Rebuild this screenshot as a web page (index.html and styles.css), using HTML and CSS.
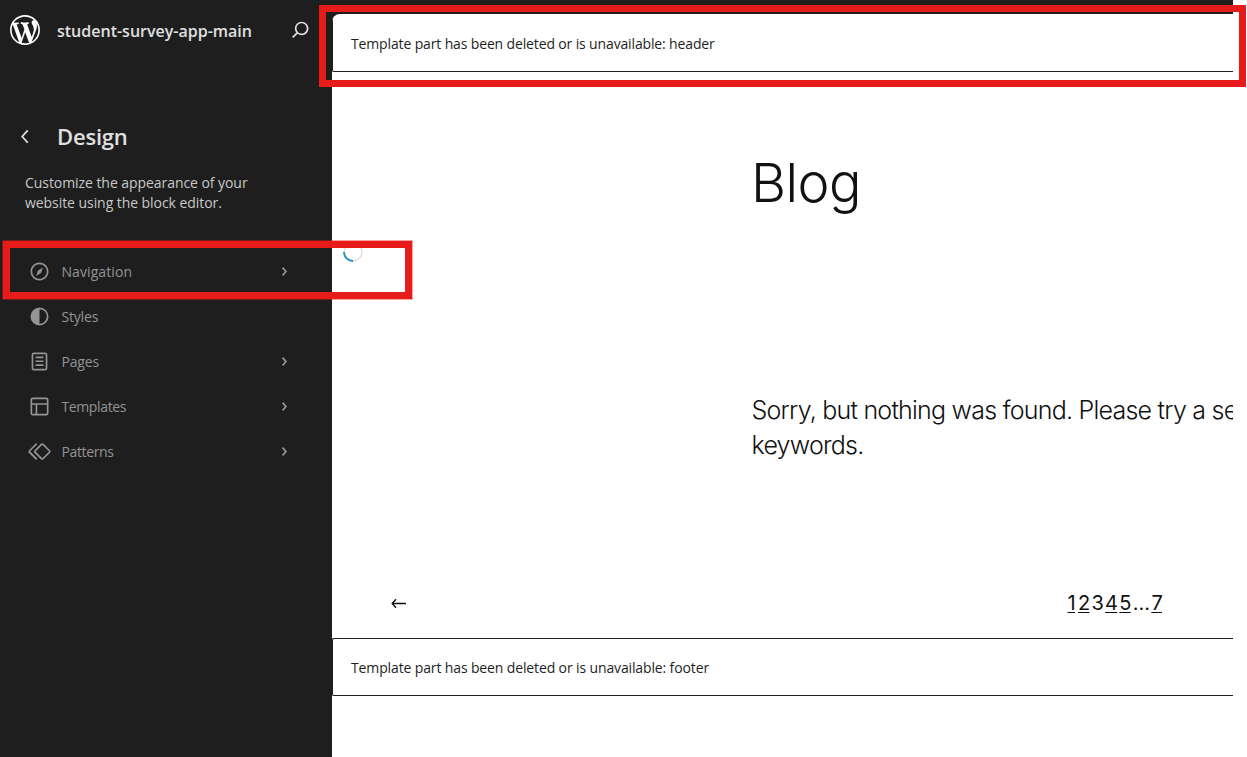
FILE: index.html
```html
<!DOCTYPE html>
<html lang="en">
<head>
<meta charset="utf-8">
<title>Design</title>
<link rel="stylesheet" href="styles.css">
</head>
<body>
<div class="app">
  <aside class="sidebar">
    <header class="site">
      <svg class="logo" viewBox="0 0 20 20"><path d="M20 10c0-5.51-4.49-10-10-10C4.48 0 0 4.49 0 10c0 5.52 4.48 10 10 10 5.51 0 10-4.48 10-10zM7.78 15.37L4.37 6.22c.55-.02 1.17-.08 1.17-.08.5-.06.44-1.13-.06-1.11 0 0-1.45.11-2.37.11-.18 0-.37 0-.58-.01C4.12 2.69 6.87 1.11 10 1.11c2.33 0 4.45.87 6.05 2.34-.68-.11-1.65.39-1.65 1.58 0 .74.45 1.36.9 2.1.35.61.55 1.36.55 2.46 0 1.49-1.4 5-1.4 5l-3.03-8.37c.54-.02.82-.17.82-.17.5-.05.44-1.25-.06-1.22 0 0-1.44.12-2.38.12-.87 0-2.33-.12-2.33-.12-.5-.03-.56 1.2-.06 1.22l.92.08 1.26 3.41zM17.41 10c.24-.64.74-1.87.43-4.25.7 1.29 1.05 2.71 1.05 4.25 0 3.29-1.73 6.24-4.4 7.78.97-2.59 1.94-5.2 2.92-7.78zM6.1 18.09C3.12 16.65 1.11 13.53 1.11 10c0-1.3.23-2.48.72-3.59C3.25 10.3 4.67 14.2 6.1 18.09zm4.03-6.63l2.58 6.98c-.86.29-1.76.45-2.71.45-.79 0-1.57-.11-2.29-.33.81-2.38 1.62-4.74 2.42-7.1z"/></svg>
      <span class="site-name">student-survey-app-main</span>
      <svg class="icon search" viewBox="0 0 24 24"><path d="M13 5c-3.3 0-6 2.7-6 6 0 1.4.5 2.7 1.3 3.7l-3.8 3.8 1.1 1.1 3.8-3.8c1 .8 2.3 1.3 3.7 1.3 3.3 0 6-2.7 6-6S16.3 5 13 5zm0 10.5c-2.5 0-4.5-2-4.5-4.5s2-4.5 4.5-4.5 4.5 2 4.5 4.5-2 4.5-4.5 4.5z"/></svg>
    </header>
    <div class="heading">
      <svg class="icon" viewBox="0 0 24 24"><path d="M14.6 7l-1.2-1L8 12l5.4 6 1.2-1-4.6-5z"/></svg>
      <h1 class="title">Design</h1>
    </div>
    <p class="description">Customize the appearance of your<br>website using the block editor.</p>
    <nav class="menu">
      <a class="item">
        <svg class="icon" viewBox="0 0 24 24"><path fill-rule="evenodd" d="M12 4c-4.4 0-8 3.6-8 8s3.6 8 8 8 8-3.6 8-8-3.6-8-8-8zm0 14.5c-3.6 0-6.5-2.9-6.5-6.5S8.4 5.5 12 5.5s6.5 2.9 6.5 6.5-2.9 6.5-6.5 6.5zM9 16l4.5-3L15 8.4l-4.5 3L9 16z"/></svg>
        <span class="label label-wide">Navigation</span>
        <svg class="icon" viewBox="0 0 24 24"><path d="M10.862 8.04L14.28 12.03L10.862 16.017L9.723 15.04L12.305 12.03L9.723 9.017Z"/></svg>
      </a>
      <a class="item">
        <svg class="icon" viewBox="0 0 24 24"><path fill-rule="evenodd" d="M20 12a8 8 0 1 1-16 0 8 8 0 0 1 16 0Zm-1.5 0a6.5 6.5 0 0 1-6.5 6.5v-13a6.5 6.5 0 0 1 6.5 6.5Z"/></svg>
        <span class="label">Styles</span>
      </a>
      <a class="item">
        <svg class="icon" viewBox="0 0 24 24"><path d="M15.5 7.5h-7V9h7V7.5Zm-7 3.5h7v1.5h-7V11Zm7 3.5h-7V16h7v-1.5Z"/><path fill-rule="evenodd" d="M17 4H7a2 2 0 0 0-2 2v12a2 2 0 0 0 2 2h10a2 2 0 0 0 2-2V6a2 2 0 0 0-2-2ZM7 5.5h10a.5.5 0 0 1 .5.5v12a.5.5 0 0 1-.5.5H7a.5.5 0 0 1-.5-.5V6a.5.5 0 0 1 .5-.5Z"/></svg>
        <span class="label">Pages</span>
        <svg class="icon" viewBox="0 0 24 24"><path d="M10.862 8.04L14.28 12.03L10.862 16.017L9.723 15.04L12.305 12.03L9.723 9.017Z"/></svg>
      </a>
      <a class="item">
        <svg class="icon" viewBox="0 0 24 24"><path fill-rule="evenodd" d="M18 5.5H6a.5.5 0 0 0-.5.5v3h13V6a.5.5 0 0 0-.5-.5zm.5 5H10v8h8a.5.5 0 0 0 .5-.5v-7.5zm-10 0h-3V18a.5.5 0 0 0 .5.5h2.5v-8zM6 4h12a2 2 0 0 1 2 2v12a2 2 0 0 1-2 2H6a2 2 0 0 1-2-2V6a2 2 0 0 1 2-2z"/></svg>
        <span class="label label-narrow">Templates</span>
        <svg class="icon" viewBox="0 0 24 24"><path d="M10.862 8.04L14.28 12.03L10.862 16.017L9.723 15.04L12.305 12.03L9.723 9.017Z"/></svg>
      </a>
      <a class="item">
        <svg class="icon" viewBox="0 0 24 24"><path d="M21.3 10.8l-5.6-5.6c-.7-.7-1.8-.7-2.5 0l-5.6 5.6c-.7.7-.7 1.8 0 2.5l5.6 5.6c.3.3.8.5 1.2.5s.9-.2 1.2-.5l5.6-5.6c.8-.7.8-1.9.1-2.5zm-1 1.4l-5.6 5.6c-.1.1-.3.1-.4 0l-5.6-5.6c-.1-.1-.1-.3 0-.4l5.6-5.6s.1-.1.2-.1.1 0 .2.1l5.6 5.6c.1.1.1.3 0 .4zm-16.6-.4L10 5.5l-1-1-6.3 6.3c-.7.7-.7 1.8 0 2.5L9 19.5l1.1-1.1-6.3-6.3c-.2 0-.2-.2-.1-.3z"/></svg>
        <span class="label label-narrow">Patterns</span>
        <svg class="icon" viewBox="0 0 24 24"><path d="M10.862 8.04L14.28 12.03L10.862 16.017L9.723 15.04L12.305 12.03L9.723 9.017Z"/></svg>
      </a>
    </nav>
  </aside>
  <main class="canvas">
    <section class="page">
      <div class="part part-header">Template part has been deleted or is unavailable: header</div>
      <div class="content">
        <h2 class="blog">Blog</h2>
        <svg class="spinner" viewBox="0 0 20 20"><circle cx="10" cy="10" r="9" stroke="#ddd"/><path d="M10 19A9 9 0 0 1 1 10" stroke="#1e8cbe" stroke-width="1.8"/></svg>
        <p class="empty">Sorry, but nothing was found. Please try a se<br>keywords.</p>
        <div class="pagination">
          <svg class="arrow" viewBox="0 0 16 12"><path d="M15 6.5H1.5M5 2.2L1.2 6.5l3.8 4.3"/></svg>
          <div class="numbers"><u class="one">1</u><u>2</u><span>3</span><u>4</u><u>5</u><span class="dots">…</span><u>7</u></div>
        </div>
      </div>
      <div class="part">Template part has been deleted or is unavailable: footer</div>
    </section>
  </main>
</div>
<div class="mark mark-header"></div>
<div class="mark mark-nav"></div>
</body>
</html>
```
FILE: styles.css
```css
* { box-sizing: border-box; }
body { margin: 0; background: #fff; overflow: hidden; font-family: "Open Sans", "Noto Sans", sans-serif; }
h1, h2, p { margin: 0; }
.app { display: flex; width: 1247px; height: 757px; }
.sidebar { width: 332px; flex: none; background: #1e1e1e; color: #e0e0e0; }
.icon { width: 27px; height: 27px; flex: none; fill: currentColor; display: block; }
.site { display: flex; align-items: center; height: 60px; padding-left: 10px; }
.logo { width: 30px; height: 30px; fill: #fff; margin-right: 17px; flex: none; }
.site-name { width: 230px; font-size: 16px; font-weight: 600; letter-spacing: 0; line-height: 24px; padding-top: 1px; white-space: nowrap; }
.search { margin-top: -1px; }
.heading { display: flex; align-items: center; height: 36px; margin-top: 59px; padding-left: 12px; }
.title { margin: -2px 0 0 18px; font-size: 22px; font-weight: 600; line-height: 36px; letter-spacing: -0.2px; }
.heading .icon { margin-bottom: 2px; }
.description { margin: 18px 0 0 25px; font-size: 14px; line-height: 20px; color: #c8c8c8; white-space: nowrap; letter-spacing: -0.06px; }
.menu { margin-top: 36px; }
.item { display: flex; align-items: center; height: 45px; padding: 0 34px 0 26px; color: #949494; }
.label { flex: 1; margin-left: 8.4px; font-size: 14px; line-height: 20px; letter-spacing: -0.15px; }
.label-wide { letter-spacing: 0.1px; }
.label-narrow { letter-spacing: -0.35px; }
.canvas { width: 901px; flex: none; background: #1e1e1e; padding-top: 14px; overflow: hidden; }
.page { height: 743px; background: #fff; border-top-left-radius: 8px; overflow: hidden; color: #111; }
.part { display: flex; align-items: center; height: 58px; border: 1px solid #1e1e1e; border-right: 0; border-radius: 2px 0 0 2px; padding-left: 18px; font-size: 14px; letter-spacing: -0.13px; color: #1e1e1e; white-space: nowrap; }
.part-header { border-top: 0; padding-top: 2px; letter-spacing: -0.14px; }
.content { display: flex; flex-direction: column; height: 566px; font-family: Inter, sans-serif; }
.blog { margin: 77px 0 0 419px; font-size: 54px; line-height: 68px; font-weight: 350; letter-spacing: -0.6px; }
.spinner { display: block; width: 20px; height: 20px; margin: 25px 0 0 11px; fill: none; stroke-width: 1.4; flex: none; }
.empty { margin: 131px 0 0 419.5px; font-size: 25px; line-height: 35px; font-weight: 300; letter-spacing: -0.77px; white-space: nowrap; }
.pagination { display: flex; align-items: center; justify-content: space-between; height: 30px; margin: 125px 71px 0 59px; }
.arrow { width: 16px; height: 12px; fill: none; stroke: #111; stroke-width: 1.4; }
.numbers { display: flex; gap: 2px; font-size: 20px; line-height: 28px; letter-spacing: -0.7px; }
.numbers u { text-underline-offset: 2px; text-decoration-thickness: 1px; }
.numbers .one { margin-right: 1px; }
.mark { position: absolute; border: 7px solid #e81b1b; }
.mark-header { left: 319px; top: 5px; width: 927px; height: 82px; }
.mark-nav { left: 3px; top: 241px; width: 409px; height: 58px; box-shadow: 0 0 0 1px rgba(232, 27, 27, 0.4); }
```
